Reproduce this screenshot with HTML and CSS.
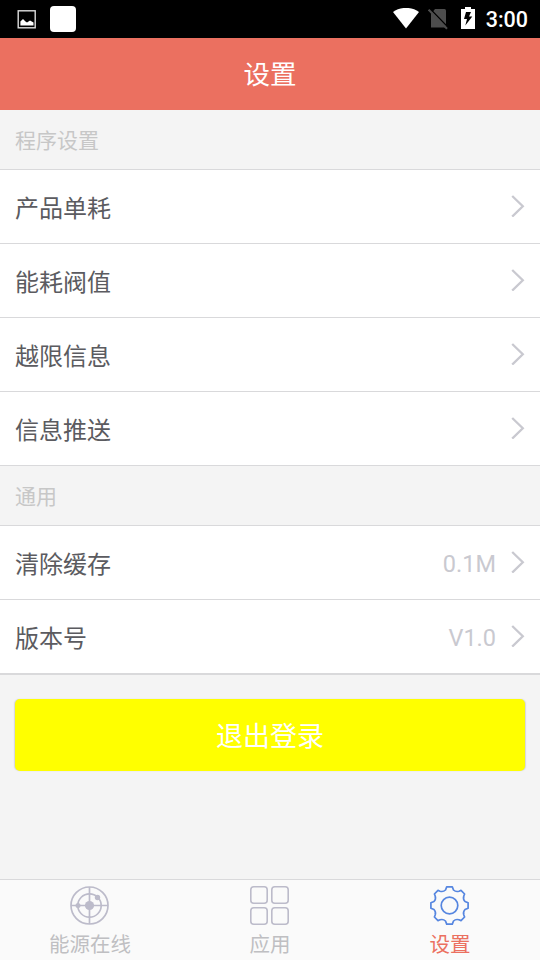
FILE: index.html
```html
<!DOCTYPE html>
<html lang="zh-CN">
<head>
<meta charset="utf-8">
<title>设置</title>
<link rel="stylesheet" href="styles.css">
</head>
<body>
<svg class="defs" width="0" height="0">
  <symbol id="chevron" viewBox="0 0 14 22"><path d="M1.200 1 11.800 11.300 1.200 21.600" fill="none" stroke="#c9c9d0" stroke-width="2.300"/></symbol>
</svg>
<div class="status">
  <svg class="picture" width="19" height="19" viewBox="0 0 19 19"><rect x="1.200" y=".8" width="17" height="17" fill="none" stroke="#ddd" stroke-width="1.400"/><path d="M3.400 15.500V11.500L6 9l2.500 2.500 1.500 1 3-2 3.500 2v3z" fill="#fff"/></svg>
  <span class="app"></span>
  <svg class="wifi" width="26" height="21" viewBox="0 0 26 21"><path d="M0 4C7-1.500 19-1.500 26 4L13 20.500z" fill="#fff"/></svg>
  <svg class="sim" width="20" height="22" viewBox="0 0 20 22"><path d="M7 1H16.500Q18 1 18 2.500V19.500H3V6z" fill="#4d4d4d"/><path d="M1.700 .5 20.700 20" stroke="#000" stroke-width="1.500"/><path d="M.7 1.700 19 20.700" stroke="#4d4d4d" stroke-width="2"/></svg>
  <svg class="battery" width="14" height="22" viewBox="0 0 14 22"><path d="M4 0h6v2h4v20H0V2h4z" fill="#fff"/><path d="M10 5H5L3 12h3L4.300 18.500 11.300 9.500H8z" fill="#000"/></svg>
  <time>3:00</time>
</div>
<header>设置</header>
<main>
  <h2>程序设置</h2>
  <ul>
    <li><span>产品单耗</span><svg class="arrow"><use href="#chevron"/></svg></li>
    <li><span>能耗阀值</span><svg class="arrow"><use href="#chevron"/></svg></li>
    <li><span>越限信息</span><svg class="arrow"><use href="#chevron"/></svg></li>
    <li><span>信息推送</span><svg class="arrow"><use href="#chevron"/></svg></li>
  </ul>
  <h2>通用</h2>
  <ul class="last">
    <li><span>清除缓存</span><em>0.1M</em><svg class="arrow"><use href="#chevron"/></svg></li>
    <li><span>版本号</span><em>V1.0</em><svg class="arrow"><use href="#chevron"/></svg></li>
  </ul>
  <button>退出登录</button>
</main>
<nav>
  <a>
    <svg width="39" height="39" viewBox="0 0 39 39"><g fill="none" stroke="#bcbbca" stroke-width="1.700"><circle cx="19.500" cy="19.500" r="18.500"/><circle cx="19.500" cy="19.500" r="11.700"/><path d="M19.500 1V38M1 19.500H38"/></g><g fill="#bcbbca"><circle cx="19.500" cy="19.500" r="4.600"/><circle cx="27.500" cy="11.500" r="2.700"/><circle cx="8" cy="19.500" r="2.500"/></g></svg>
    <span>能源在线</span>
  </a>
  <a>
    <svg width="39" height="39" viewBox="0 0 39 39"><g fill="none" stroke="#bcbbca" stroke-width="1.600"><rect x=".8" y=".8" width="16.400" height="16.400" rx="3"/><rect x="21.800" y=".8" width="16.400" height="16.400" rx="3"/><rect x=".8" y="21.800" width="16.400" height="16.400" rx="3"/><rect x="21.800" y="21.800" width="16.400" height="16.400" rx="3"/></g></svg>
    <span>应用</span>
  </a>
  <a class="active">
    <svg width="39" height="39" viewBox="0 0 39 39"><g fill="none" stroke="#5686e0" stroke-width="1.700" stroke-linejoin="round"><circle cx="19.500" cy="19.500" r="8.300"/><path d="M16.700 .9H22.300L23.500 4Q25.800 6.200 29 5.200L31 4.400L34.600 8L33.800 10Q32.800 13.200 35 15.500L38.100 16.700V22.300L35 23.500Q32.800 25.800 33.800 29L34.600 31L31 34.600L29 33.800Q25.800 32.800 23.500 35L22.300 38.100H16.700L15.500 35Q13.200 32.800 10 33.800L8 34.600L4.400 31L5.200 29Q6.200 25.800 4 23.500L.9 22.300V16.700L4 15.500Q6.200 13.200 5.200 10L4.400 8L8 4.400L10 5.200Q13.200 6.200 15.500 4z"/></g></svg>
    <span>设置</span>
  </a>
</nav>
</body>
</html>
```

FILE: styles.css
```css
* { box-sizing: border-box; }
body {
  margin: 0;
  height: 960px;
  display: flex;
  flex-direction: column;
  background: #f4f4f4;
  font-family: Roboto, "Noto Sans CJK SC", sans-serif;
  overflow: hidden;
}
.defs { display: none; }
.status {
  height: 38px;
  display: flex;
  align-items: center;
  padding: 0 12px 0 17px;
  background: #000;
  color: #fff;
}
.app { width: 26px; height: 26px; margin-left: 14px; border-radius: 4px; background: #fff; }
.wifi { margin: 0 0 1px auto; }
.sim { margin-left: 9px; }
.battery { margin: 0 11px 2px 13px; }
.status time { font-size: 21.500px; font-weight: 500; line-height: 38px; padding-top: 1px; }
header {
  height: 72px;
  background: #eb7060;
  color: #fff;
  text-align: center;
  font-size: 26.500px;
  line-height: 73px;
}
main { flex: 1; }
h2 {
  margin: 0;
  height: 60px;
  padding-left: 15px;
  border-bottom: 1px solid #d9d9db;
  color: #c7c7c7;
  font-size: 21px;
  font-weight: 400;
  line-height: 62px;
}
ul { margin: 0; padding: 0; list-style: none; background: #fff; }
li {
  height: 74px;
  display: flex;
  align-items: center;
  padding: 0 15px;
  border-bottom: 1px solid #d9d9db;
  color: #5b5b60;
  font-size: 24px;
  line-height: 67px;
}
.last { border-bottom: 1px solid #d9d9db; }
li span { margin-right: auto; padding-top: 6px; }
li em { margin-right: 15px; padding-top: 3px; color: #c9c9d0; font-size: 23.500px; font-style: normal; }
.arrow { width: 14px; height: 22px; margin-bottom: 1px; }
button {
  display: block;
  width: 510px;
  height: 72px;
  margin: 24px 15px 0;
  padding: 4px 0 0;
  border: 0;
  border-radius: 5px;
  background: #ff0;
  box-shadow: -1px 0 1px #d5d5dc, 1px 0 1px #d5d5dc;
  color: #fff;
  font: 27px/68px Roboto, "Noto Sans CJK SC", sans-serif;
}
nav {
  height: 81px;
  display: flex;
  border-top: 1px solid #d9d9db;
  background: #fafafa;
}
nav a {
  flex: 1;
  display: flex;
  flex-direction: column;
  align-items: center;
  padding-top: 6px;
  color: #bfbfc2;
  font-size: 20.500px;
  line-height: 40px;
}
nav svg { position: relative; left: -.5px; flex: none; }
.active { color: #eb7060; }
```
